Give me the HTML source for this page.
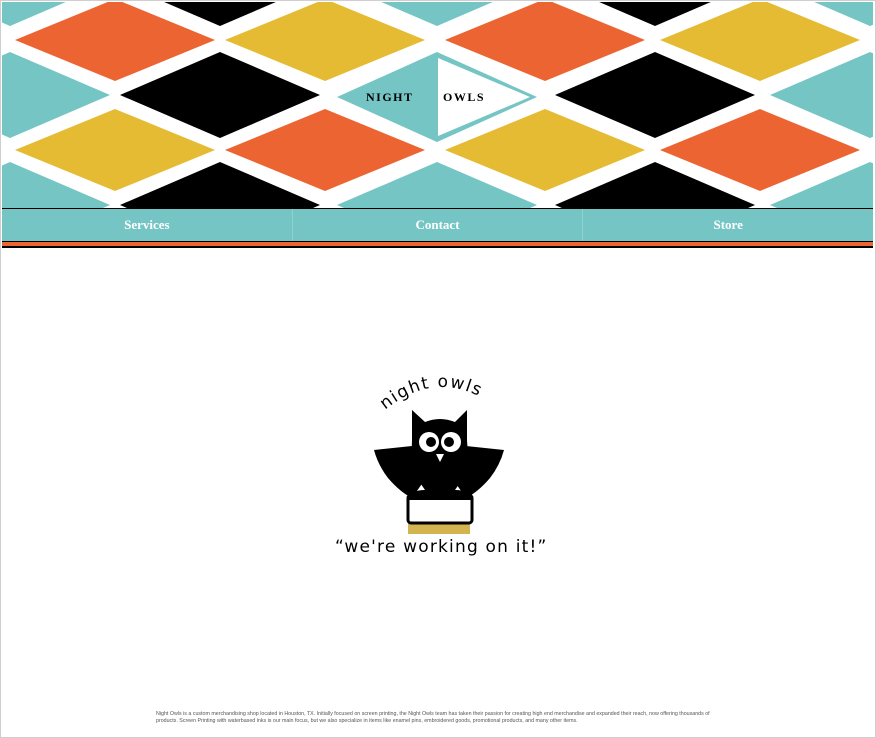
<!DOCTYPE html>
<html><head><meta charset="utf-8"><style>
html,body{margin:0;padding:0;background:#fff}
body{width:876px;height:738px;position:relative;overflow:hidden;font-family:"Liberation Sans",sans-serif}
.frame{position:absolute;left:0;top:0;width:874px;height:736px;border:1px solid #cfcfcf}
.nav{position:absolute;left:2px;top:208px;width:871px;height:32px;background:#75c5c5;border-top:1px solid #000;border-bottom:1px solid #000;display:flex}
.nav div{flex:1;text-align:center;color:#fff;font-family:"Liberation Serif",serif;font-weight:bold;font-size:13px;line-height:32px;border-right:1px solid #8fd2d2}
.nav div:last-child{border-right:none}
.or{position:absolute;left:2px;top:242px;width:871px;height:4px;background:#ec6432;border-bottom:2px solid #000}
.foot{position:absolute;left:156px;top:711px;width:568px;font-size:5.3px;line-height:7px;color:#555}
</style></head><body>
<div class="frame"></div>
<svg style="position:absolute;left:2px;top:2px" width="871" height="206" viewBox="2 2 871 206">
<rect x="0" y="0" width="876" height="210" fill="#fff"/>
<g stroke="none">
<polygon points="120,-17 220,-60 320,-17 220,26" fill="#000"/>
<polygon points="337,-17 437,-60 537,-17 437,26" fill="#75c5c5"/>
<polygon points="555,-17 655,-60 755,-17 655,26" fill="#000"/>
<polygon points="-90,-17 10,-60 110,-17 10,26" fill="#75c5c5"/>
<polygon points="770,-17 870,-60 970,-17 870,26" fill="#75c5c5"/>

<polygon points="15,40 115,-1 215,40 115,81" fill="#ec6432"/>
<polygon points="225,40 325,-1 425,40 325,81" fill="#e5bb33"/>
<polygon points="445,40 545,-1 645,40 545,81" fill="#ec6432"/>
<polygon points="660,40 760,-1 860,40 760,81" fill="#e5bb33"/>

<polygon points="-90,95 10,52 110,95 10,138" fill="#75c5c5"/>
<polygon points="120,95 220,52 320,95 220,138" fill="#000"/>
<polygon points="555,95 655,52 755,95 655,138" fill="#000"/>
<polygon points="770,95 870,52 970,95 870,138" fill="#75c5c5"/>

<polygon points="15,150 115,109 215,150 115,191" fill="#e5bb33"/>
<polygon points="225,150 325,109 425,150 325,191" fill="#ec6432"/>
<polygon points="445,150 545,109 645,150 545,191" fill="#e5bb33"/>
<polygon points="660,150 760,109 860,150 760,191" fill="#ec6432"/>

<polygon points="-90,205 10,162 110,205 10,248" fill="#75c5c5"/>
<polygon points="120,205 220,162 320,205 220,248" fill="#000"/>
<polygon points="337,205 437,162 537,205 437,248" fill="#75c5c5"/>
<polygon points="555,205 655,162 755,205 655,248" fill="#000"/>
<polygon points="770,205 870,162 970,205 870,248" fill="#75c5c5"/>

<polygon points="337,97 437,52 537,97 437,142" fill="#75c5c5"/>
<polygon points="438,58 530,97 438,136" fill="#fff"/>
</g>
<text x="366" y="101" font-family="Liberation Serif,serif" font-weight="bold" font-size="12" letter-spacing="1.5" fill="#000">NIGHT</text>
<text x="443" y="101" font-family="Liberation Serif,serif" font-weight="bold" font-size="12" letter-spacing="1.5" fill="#000">OWLS</text>
</svg>
<div class="nav"><div>Services</div><div>Contact</div><div>Store</div></div>
<div class="or"></div>

<svg style="position:absolute;left:330px;top:370px" width="220" height="200" viewBox="0 0 220 200">
<defs><path id="arc" d="M55,40 Q110,-5 168,38"/></defs>
<text font-family="DejaVu Sans,sans-serif" font-size="17" fill="#000" letter-spacing="1.5"><textPath href="#arc">night owls</textPath></text>
<rect x="78" y="152" width="62" height="12" fill="#d2b450"/>
<path d="M44,80 L82,76 L96,108 L82,128 Q70,122 58,108 Q48,95 44,80Z" fill="#000"/>
<path d="M174,80 L136,76 L122,108 L136,128 Q148,122 160,108 Q170,95 174,80Z" fill="#000"/>
<path d="M82,40 L95,52 Q110,46 125,52 L137,40 L137,70 Q140,100 125,120 L95,120 Q80,100 82,70Z" fill="#000"/>
<circle cx="99" cy="72" r="10" fill="#fff"/><circle cx="121" cy="72" r="10" fill="#fff"/>
<circle cx="101" cy="72" r="5" fill="#000"/><circle cx="119" cy="72" r="5" fill="#000"/>
<path d="M106,84 L110,92 L114,84Z" fill="#fff"/>
<rect x="78" y="125" width="64" height="28" rx="3" fill="#fff" stroke="#000" stroke-width="3"/>
<path d="M78,130 Q80,120 95,120 L125,120 Q140,120 142,130" fill="#000"/>
<text x="5" y="182" font-family="DejaVu Sans,sans-serif" font-size="17" fill="#000" letter-spacing="1.2">“we're working on it!”</text>
</svg>

<div class="foot">Night Owls is a custom merchandising shop located in Houston, TX. Initially focused on screen printing, the Night Owls team has taken their passion for creating high end merchandise and expanded their reach, now offering thousands of products. Screen Printing with waterbased inks is our main focus, but we also specialize in items like enamel pins, embroidered goods, promotional products, and many other items.</div>
</body></html>
